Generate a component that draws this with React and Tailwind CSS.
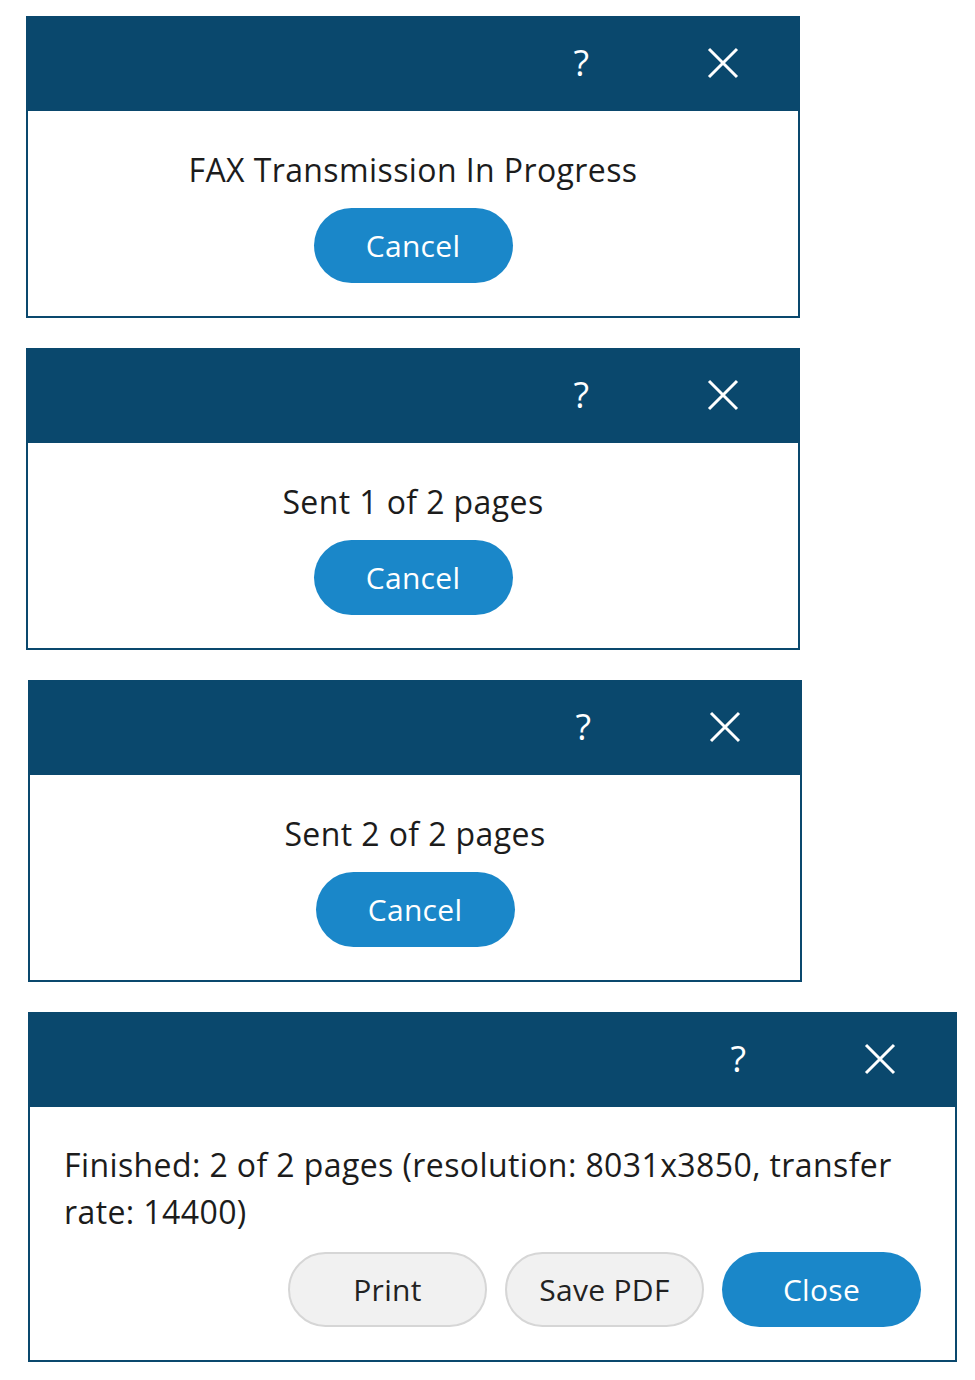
import React from "react";

const font = { fontFamily: '"Open Sans", "Noto Sans", sans-serif' };

function CloseGlyph() {
  return (
    <svg width="32" height="32" viewBox="0 0 32 32" className="block">
      <path d="M2 2 L30 30 M30 2 L2 30" stroke="white" strokeWidth="3" fill="none" />
    </svg>
  );
}

function TitleBar() {
  return (
    <div className="flex h-[93px] items-center justify-end bg-[#0a486d] pb-[3px] pr-[59px] text-white">
      <span className="mr-[118px] text-[36px] leading-none">?</span>
      <CloseGlyph />
    </div>
  );
}

function PillButton({ children, variant = "primary" }) {
  const look =
    variant === "primary"
      ? "bg-[#1a87c9] text-white"
      : "border-2 border-[#d6d6d6] bg-[#f1f1f1] text-[#222]";
  return (
    <button
      className={`flex h-[75px] w-[199px] items-center justify-center rounded-full text-[30px] tracking-[0.3px] ${look}`}
    >
      {children}
    </button>
  );
}

function ProgressDialog({ message, className = "" }) {
  return (
    <div className={`w-[774px] border-2 border-[#0a486d] bg-white ${className}`}>
      <TitleBar />
      <div className="flex flex-col items-center pb-[33px] pt-[38px]">
        <p className="text-[32px] leading-[42px] tracking-[0.4px] text-[#1c1c1c]">{message}</p>
        <div className="mt-[17px]">
          <PillButton>Cancel</PillButton>
        </div>
      </div>
    </div>
  );
}

function FinishedDialog() {
  return (
    <div className="ml-[28px] w-[929px] border-2 border-[#0a486d] bg-white">
      <TitleBar />
      <div className="px-[34px] pb-[33px] pt-[34px]">
        <p className="text-[32px] leading-[47px] tracking-[0.4px] text-[#1c1c1c]">
          Finished: 2 of 2 pages (resolution: 8031x3850, transfer rate: 14400)
        </p>
        <div className="mt-[17px] flex justify-end gap-[18px]">
          <PillButton variant="secondary">Print</PillButton>
          <PillButton variant="secondary">Save PDF</PillButton>
          <PillButton>Close</PillButton>
        </div>
      </div>
    </div>
  );
}

export default function App() {
  return (
    <div className="min-h-[1380px] w-[975px] bg-white pt-[16px]" style={font}>
      <div className="flex flex-col gap-[30px]">
        <ProgressDialog message="FAX Transmission In Progress" className="ml-[26px]" />
        <ProgressDialog message="Sent 1 of 2 pages" className="ml-[26px]" />
        <ProgressDialog message="Sent 2 of 2 pages" className="ml-[28px]" />
        <FinishedDialog />
      </div>
    </div>
  );
}
